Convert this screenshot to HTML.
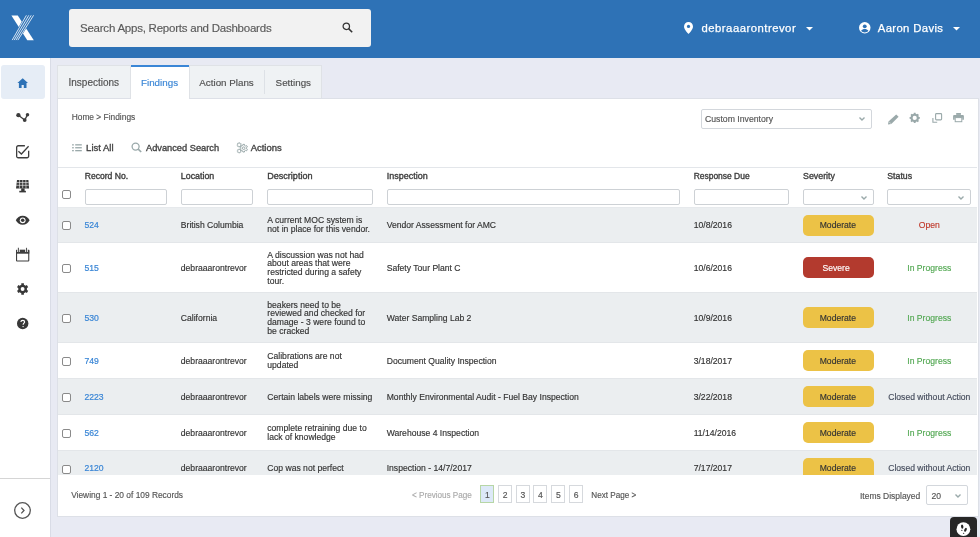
<!DOCTYPE html>
<html><head><meta charset="utf-8">
<style>
*{margin:0;padding:0;box-sizing:border-box;}
html,body{width:980px;height:537px;overflow:hidden;background:#e8eaf3;font-family:"Liberation Sans", sans-serif;color:#333;position:relative;}
.a{position:absolute;}
.t{position:absolute;white-space:nowrap;-webkit-text-stroke:0.15px currentColor;}
svg{position:absolute;overflow:visible;}
</style></head><body>
<div id="root" style="position:absolute;left:0;top:0;width:980px;height:537px;will-change:transform;">
<div class="a" style="left:0px;top:0px;width:980px;height:58px;background:#2e72b6;"></div>
<div class="a" style="left:69px;top:9px;width:302px;height:38px;background:#f2f2f2;border-radius:3px;"></div>
<div class="t " style="left:80px;top:21px;font-size:11.5px;line-height:14.38px;color:#5a5a5a;letter-spacing:-0.23px;">Search Apps, Reports and Dashboards</div>
<svg style="left:341.8px;top:22.4px" width="11" height="11" viewBox="0 0 11 11">
<circle cx="4.3" cy="4.3" r="3.2" stroke="#333" stroke-width="1.25" fill="none"/>
<line x1="6.6" y1="6.6" x2="10.2" y2="10.2" stroke="#333" stroke-width="1.5"/></svg>
<svg style="left:684px;top:22px" width="9" height="12" viewBox="0 0 9 12">
<path d="M4.5 0C2 0 0 2 0 4.5 0 7.6 4.5 12 4.5 12S9 7.6 9 4.5C9 2 7 0 4.5 0z" fill="#fff"/>
<circle cx="4.5" cy="4.4" r="1.6" fill="#2e72b6"/></svg>
<div class="t " style="left:701.5px;top:21px;font-size:11.3px;line-height:14.12px;color:#fff;letter-spacing:0.5px;-webkit-text-stroke:0.25px #fff;">debraaarontrevor</div>
<svg style="left:805.5px;top:26.5px" width="7" height="4" viewBox="0 0 7 4"><polygon points="0,0 7,0 3.5,3.6" fill="#fff"/></svg>
<svg style="left:858.5px;top:22px" width="11.5" height="11.5" viewBox="0 0 12 12">
<circle cx="6" cy="6" r="6" fill="#fff"/><circle cx="6" cy="4.5" r="2" fill="#2e72b6"/>
<path d="M2.2 9.2C3.1 7.9 4.5 7.4 6 7.4S8.9 7.9 9.8 9.2C8.9 10.4 7.5 11 6 11S3.1 10.4 2.2 9.2z" fill="#2e72b6"/></svg>
<div class="t " style="left:877.8px;top:21px;font-size:11.3px;line-height:14.12px;color:#fff;letter-spacing:0.36px;-webkit-text-stroke:0.25px #fff;">Aaron Davis</div>
<svg style="left:953px;top:26.5px" width="7" height="4" viewBox="0 0 7 4"><polygon points="0,0 7,0 3.5,3.6" fill="#fff"/></svg>
<div class="a" style="left:0px;top:58px;width:50px;height:479px;background:#fff;"></div>
<div class="a" style="left:50px;top:58px;width:1px;height:479px;background:#d9dce6;"></div>
<div class="a" style="left:1px;top:65px;width:44px;height:34px;background:#e6edf6;border-radius:3px;"></div>
<div class="a" style="left:0px;top:478px;width:50px;height:1px;background:#d5d5d5;"></div>
<svg style="left:14px;top:502px" width="17" height="17" viewBox="0 0 17 17">
<circle cx="8.5" cy="8.5" r="7.8" stroke="#555" stroke-width="1.3" fill="none"/>
<path d="M7.3 5.6L10 8.5 7.3 11.4" stroke="#555" stroke-width="1.3" fill="none"/></svg>
<div class="a" style="left:57px;top:65px;width:74px;height:34px;background:#eff2f4;border:1px solid #dfe2e6;border-bottom:none;"></div>
<div class="t " style="left:68.5px;top:77px;font-size:10px;line-height:12.5px;color:#505050;">Inspections</div>
<div class="a" style="left:131px;top:65px;width:58px;height:34px;background:#fff;border-top:2px solid #3a86d6;"></div>
<div class="t " style="left:141px;top:77px;font-size:9.8px;line-height:12.25px;color:#3a86d6;">Findings</div>
<div class="a" style="left:189px;top:65px;width:133px;height:34px;background:#eff2f4;border:1px solid #dfe2e6;border-bottom:none;"></div>
<div class="a" style="left:264px;top:69.5px;width:1px;height:24.5px;background:#dde1e6;"></div>
<div class="t " style="left:199.3px;top:77px;font-size:9.8px;line-height:12.25px;color:#505050;">Action Plans</div>
<div class="t " style="left:275.6px;top:77px;font-size:9.8px;line-height:12.25px;color:#505050;">Settings</div>
<div class="a" style="left:57px;top:98px;width:922px;height:419px;background:#fff;border:1px solid #dde0e7;"></div>
<div class="a" style="left:131px;top:98px;width:58px;height:1px;background:#fff;"></div>
<div class="t " style="left:71.7px;top:112px;font-size:8.4px;line-height:10.5px;color:#555;">Home &gt; Findings</div>
<div class="t " style="left:86.1px;top:142px;font-size:9.5px;line-height:11.88px;color:#444;-webkit-text-stroke:0.35px #444;">List All</div>
<div class="t " style="left:146px;top:143px;font-size:9.25px;line-height:11.56px;color:#444;-webkit-text-stroke:0.35px #444;">Advanced Search</div>
<div class="t " style="left:250.7px;top:142px;font-size:9.45px;line-height:11.81px;color:#444;-webkit-text-stroke:0.35px #444;">Actions</div>
<div class="a" style="left:700.5px;top:108.5px;width:171.5px;height:20.5px;background:#fff;border:1px solid #d3d7dc;border-radius:2px;"></div>
<div class="t " style="left:705px;top:114px;font-size:8.7px;line-height:10.88px;color:#555;">Custom Inventory</div>
<svg style="left:859px;top:117px" width="6" height="4" viewBox="0 0 6 4"><path d="M0.5 0.6L3 3.1 5.5 0.6" stroke="#9aa9aa" stroke-width="1.4" fill="none"/></svg>
<div class="a" style="left:58px;top:167px;width:919px;height:1px;background:#e3e6ea;"></div>
<div class="t " style="left:84.7px;top:171px;font-size:8.58px;line-height:10.72px;color:#3d3d3d;-webkit-text-stroke:0.35px #3d3d3d;">Record No.</div>
<div class="t " style="left:180.8px;top:171px;font-size:8.86px;line-height:11.07px;color:#3d3d3d;-webkit-text-stroke:0.35px #3d3d3d;">Location</div>
<div class="t " style="left:267.2px;top:171px;font-size:9.07px;line-height:11.34px;color:#3d3d3d;-webkit-text-stroke:0.35px #3d3d3d;">Description</div>
<div class="t " style="left:386.7px;top:171px;font-size:8.99px;line-height:11.24px;color:#3d3d3d;-webkit-text-stroke:0.35px #3d3d3d;">Inspection</div>
<div class="t " style="left:693.7px;top:171px;font-size:8.46px;line-height:10.58px;color:#3d3d3d;-webkit-text-stroke:0.35px #3d3d3d;">Response Due</div>
<div class="t " style="left:803px;top:171px;font-size:8.86px;line-height:11.07px;color:#3d3d3d;-webkit-text-stroke:0.35px #3d3d3d;">Severity</div>
<div class="t " style="left:887.3px;top:171px;font-size:8.74px;line-height:10.93px;color:#3d3d3d;-webkit-text-stroke:0.35px #3d3d3d;">Status</div>
<div class="a" style="left:62px;top:190px;width:9px;height:9px;background:#fff;border:1px solid #8a8a8a;border-radius:2px;"></div>
<div class="a" style="left:84.7px;top:189.3px;width:82.10000000000001px;height:15.4px;background:#fff;border:1px solid #cdd1d5;border-radius:2px;"></div>
<div class="a" style="left:180.6px;top:189.3px;width:72.9px;height:15.4px;background:#fff;border:1px solid #cdd1d5;border-radius:2px;"></div>
<div class="a" style="left:267.2px;top:189.3px;width:105.5px;height:15.4px;background:#fff;border:1px solid #cdd1d5;border-radius:2px;"></div>
<div class="a" style="left:386.7px;top:189.3px;width:293.09999999999997px;height:15.4px;background:#fff;border:1px solid #cdd1d5;border-radius:2px;"></div>
<div class="a" style="left:693.7px;top:189.3px;width:95.0px;height:15.4px;background:#fff;border:1px solid #cdd1d5;border-radius:2px;"></div>
<div class="a" style="left:803px;top:189.3px;width:70.60000000000002px;height:15.4px;background:#fff;border:1px solid #cdd1d5;border-radius:2px;"></div>
<div class="a" style="left:887.3px;top:189.3px;width:83.60000000000002px;height:15.4px;background:#fff;border:1px solid #cdd1d5;border-radius:2px;"></div>
<svg style="left:860.5px;top:195.5px" width="6" height="4" viewBox="0 0 6 4"><path d="M0.5 0.6L3 3.1 5.5 0.6" stroke="#9aa9aa" stroke-width="1.4" fill="none"/></svg>
<svg style="left:957.5px;top:195.5px" width="6" height="4" viewBox="0 0 6 4"><path d="M0.5 0.6L3 3.1 5.5 0.6" stroke="#9aa9aa" stroke-width="1.4" fill="none"/></svg>
<div class="a" style="left:58px;top:167px;width:919px;height:308px;overflow:hidden;">
<div class="a" style="left:0px;top:41px;width:919px;height:34px;background:#ebeef0;"></div>
<div class="a" style="left:0px;top:76px;width:919px;height:49px;background:#fff;"></div>
<div class="a" style="left:0px;top:126px;width:919px;height:49px;background:#ebeef0;"></div>
<div class="a" style="left:0px;top:176px;width:919px;height:35px;background:#fff;"></div>
<div class="a" style="left:0px;top:212px;width:919px;height:35px;background:#ebeef0;"></div>
<div class="a" style="left:0px;top:248px;width:919px;height:35px;background:#fff;"></div>
<div class="a" style="left:0px;top:284px;width:919px;height:35px;background:#ebeef0;"></div>
<div class="a" style="left:0px;top:40px;width:919px;height:1px;background:#e6e9ec;"></div>
<div class="a" style="left:0px;top:75px;width:919px;height:1px;background:#e3e6e9;"></div>
<div class="a" style="left:0px;top:125px;width:919px;height:1px;background:#e3e6e9;"></div>
<div class="a" style="left:0px;top:175px;width:919px;height:1px;background:#e3e6e9;"></div>
<div class="a" style="left:0px;top:211px;width:919px;height:1px;background:#e3e6e9;"></div>
<div class="a" style="left:0px;top:247px;width:919px;height:1px;background:#e3e6e9;"></div>
<div class="a" style="left:0px;top:283px;width:919px;height:1px;background:#e3e6e9;"></div>
<div class="a" style="left:4px;top:54.0px;width:9px;height:9px;background:#fff;border:1px solid #8a8a8a;border-radius:2px;"></div>
<div class="t " style="left:26.5px;top:53px;font-size:8.6px;line-height:10.75px;color:#3a86d6;-webkit-text-stroke:0.2px #3a86d6;">524</div>
<div class="t " style="left:122.80000000000001px;top:53px;font-size:8.6px;line-height:10.75px;color:#333;">British Columbia</div>
<div class="t " style="left:209.3px;top:48px;font-size:8.6px;line-height:10.75px;color:#333;">A current MOC system is</div>
<div class="t " style="left:209.3px;top:57px;font-size:8.6px;line-height:10.75px;color:#333;">not in place for this vendor.</div>
<div class="t " style="left:328.7px;top:53px;font-size:8.6px;line-height:10.75px;color:#333;">Vendor Assessment for AMC</div>
<div class="t " style="left:635.7px;top:53px;font-size:8.6px;line-height:10.75px;color:#333;">10/8/2016</div>
<div class="a" style="left:745px;top:47.5px;width:70.5px;height:21px;background:#ecc246;border-radius:5px;"></div>
<div class="t " style="left:761.7px;top:53px;font-size:8.6px;line-height:10.75px;color:#333;">Moderate</div>
<div class="t" style="left:829.3px;width:84px;text-align:center;top:53px;font-size:8.6px;line-height:10.75px;color:#c0392b;font-weight:normal;">Open</div>
<div class="a" style="left:4px;top:96.5px;width:9px;height:9px;background:#fff;border:1px solid #8a8a8a;border-radius:2px;"></div>
<div class="t " style="left:26.5px;top:96px;font-size:8.6px;line-height:10.75px;color:#3a86d6;-webkit-text-stroke:0.2px #3a86d6;">515</div>
<div class="t " style="left:122.80000000000001px;top:96px;font-size:8.6px;line-height:10.75px;color:#333;">debraaarontrevor</div>
<div class="t " style="left:209.3px;top:83px;font-size:8.6px;line-height:10.75px;color:#333;">A discussion was not had</div>
<div class="t " style="left:209.3px;top:91px;font-size:8.6px;line-height:10.75px;color:#333;">about areas that were</div>
<div class="t " style="left:209.3px;top:100px;font-size:8.6px;line-height:10.75px;color:#333;">restricted during a safety</div>
<div class="t " style="left:209.3px;top:109px;font-size:8.6px;line-height:10.75px;color:#333;">tour.</div>
<div class="t " style="left:328.7px;top:96px;font-size:8.6px;line-height:10.75px;color:#333;">Safety Tour Plant C</div>
<div class="t " style="left:635.7px;top:96px;font-size:8.6px;line-height:10.75px;color:#333;">10/6/2016</div>
<div class="a" style="left:745px;top:90.0px;width:70.5px;height:21px;background:#b33a2e;border-radius:5px;"></div>
<div class="t " style="left:764.5px;top:96px;font-size:8.6px;line-height:10.75px;color:#fff;">Severe</div>
<div class="t" style="left:829.3px;width:84px;text-align:center;top:96px;font-size:8.6px;line-height:10.75px;color:#52a852;font-weight:normal;">In Progress</div>
<div class="a" style="left:4px;top:146.5px;width:9px;height:9px;background:#fff;border:1px solid #8a8a8a;border-radius:2px;"></div>
<div class="t " style="left:26.5px;top:146px;font-size:8.6px;line-height:10.75px;color:#3a86d6;-webkit-text-stroke:0.2px #3a86d6;">530</div>
<div class="t " style="left:122.80000000000001px;top:146px;font-size:8.6px;line-height:10.75px;color:#333;">California</div>
<div class="t " style="left:209.3px;top:133px;font-size:8.6px;line-height:10.75px;color:#333;">beakers need to be</div>
<div class="t " style="left:209.3px;top:141px;font-size:8.6px;line-height:10.75px;color:#333;">reviewed and checked for</div>
<div class="t " style="left:209.3px;top:150px;font-size:8.6px;line-height:10.75px;color:#333;">damage - 3 were found to</div>
<div class="t " style="left:209.3px;top:159px;font-size:8.6px;line-height:10.75px;color:#333;">be cracked</div>
<div class="t " style="left:328.7px;top:146px;font-size:8.6px;line-height:10.75px;color:#333;">Water Sampling Lab 2</div>
<div class="t " style="left:635.7px;top:146px;font-size:8.6px;line-height:10.75px;color:#333;">10/9/2016</div>
<div class="a" style="left:745px;top:140.0px;width:70.5px;height:21px;background:#ecc246;border-radius:5px;"></div>
<div class="t " style="left:761.7px;top:146px;font-size:8.6px;line-height:10.75px;color:#333;">Moderate</div>
<div class="t" style="left:829.3px;width:84px;text-align:center;top:146px;font-size:8.6px;line-height:10.75px;color:#52a852;font-weight:normal;">In Progress</div>
<div class="a" style="left:4px;top:189.5px;width:9px;height:9px;background:#fff;border:1px solid #8a8a8a;border-radius:2px;"></div>
<div class="t " style="left:26.5px;top:189px;font-size:8.6px;line-height:10.75px;color:#3a86d6;-webkit-text-stroke:0.2px #3a86d6;">749</div>
<div class="t " style="left:122.80000000000001px;top:189px;font-size:8.6px;line-height:10.75px;color:#333;">debraaarontrevor</div>
<div class="t " style="left:209.3px;top:184px;font-size:8.6px;line-height:10.75px;color:#333;">Calibrations are not</div>
<div class="t " style="left:209.3px;top:193px;font-size:8.6px;line-height:10.75px;color:#333;">updated</div>
<div class="t " style="left:328.7px;top:189px;font-size:8.6px;line-height:10.75px;color:#333;">Document Quality Inspection</div>
<div class="t " style="left:635.7px;top:189px;font-size:8.6px;line-height:10.75px;color:#333;">3/18/2017</div>
<div class="a" style="left:745px;top:183.0px;width:70.5px;height:21px;background:#ecc246;border-radius:5px;"></div>
<div class="t " style="left:761.7px;top:189px;font-size:8.6px;line-height:10.75px;color:#333;">Moderate</div>
<div class="t" style="left:829.3px;width:84px;text-align:center;top:189px;font-size:8.6px;line-height:10.75px;color:#52a852;font-weight:normal;">In Progress</div>
<div class="a" style="left:4px;top:225.5px;width:9px;height:9px;background:#fff;border:1px solid #8a8a8a;border-radius:2px;"></div>
<div class="t " style="left:26.5px;top:225px;font-size:8.6px;line-height:10.75px;color:#3a86d6;-webkit-text-stroke:0.2px #3a86d6;">2223</div>
<div class="t " style="left:122.80000000000001px;top:225px;font-size:8.6px;line-height:10.75px;color:#333;">debraaarontrevor</div>
<div class="t " style="left:209.3px;top:225px;font-size:8.6px;line-height:10.75px;color:#333;">Certain labels were missing</div>
<div class="t " style="left:328.7px;top:225px;font-size:8.6px;line-height:10.75px;color:#333;">Monthly Environmental Audit - Fuel Bay Inspection</div>
<div class="t " style="left:635.7px;top:225px;font-size:8.6px;line-height:10.75px;color:#333;">3/22/2018</div>
<div class="a" style="left:745px;top:219.0px;width:70.5px;height:21px;background:#ecc246;border-radius:5px;"></div>
<div class="t " style="left:761.7px;top:225px;font-size:8.6px;line-height:10.75px;color:#333;">Moderate</div>
<div class="t" style="left:829.3px;width:84px;text-align:center;top:225px;font-size:8.6px;line-height:10.75px;color:#454c5c;font-weight:normal;">Closed without Action</div>
<div class="a" style="left:4px;top:261.5px;width:9px;height:9px;background:#fff;border:1px solid #8a8a8a;border-radius:2px;"></div>
<div class="t " style="left:26.5px;top:261px;font-size:8.6px;line-height:10.75px;color:#3a86d6;-webkit-text-stroke:0.2px #3a86d6;">562</div>
<div class="t " style="left:122.80000000000001px;top:261px;font-size:8.6px;line-height:10.75px;color:#333;">debraaarontrevor</div>
<div class="t " style="left:209.3px;top:256px;font-size:8.6px;line-height:10.75px;color:#333;">complete retraining due to</div>
<div class="t " style="left:209.3px;top:265px;font-size:8.6px;line-height:10.75px;color:#333;">lack of knowledge</div>
<div class="t " style="left:328.7px;top:261px;font-size:8.6px;line-height:10.75px;color:#333;">Warehouse 4 Inspection</div>
<div class="t " style="left:635.7px;top:261px;font-size:8.6px;line-height:10.75px;color:#333;">11/14/2016</div>
<div class="a" style="left:745px;top:255.0px;width:70.5px;height:21px;background:#ecc246;border-radius:5px;"></div>
<div class="t " style="left:761.7px;top:261px;font-size:8.6px;line-height:10.75px;color:#333;">Moderate</div>
<div class="t" style="left:829.3px;width:84px;text-align:center;top:261px;font-size:8.6px;line-height:10.75px;color:#52a852;font-weight:normal;">In Progress</div>
<div class="a" style="left:4px;top:297.5px;width:9px;height:9px;background:#fff;border:1px solid #8a8a8a;border-radius:2px;"></div>
<div class="t " style="left:26.5px;top:296px;font-size:8.6px;line-height:10.75px;color:#3a86d6;-webkit-text-stroke:0.2px #3a86d6;">2120</div>
<div class="t " style="left:122.80000000000001px;top:296px;font-size:8.6px;line-height:10.75px;color:#333;">debraaarontrevor</div>
<div class="t " style="left:209.3px;top:296px;font-size:8.6px;line-height:10.75px;color:#333;">Cop was not perfect</div>
<div class="t " style="left:328.7px;top:296px;font-size:8.6px;line-height:10.75px;color:#333;">Inspection - 14/7/2017</div>
<div class="t " style="left:635.7px;top:296px;font-size:8.6px;line-height:10.75px;color:#333;">7/17/2017</div>
<div class="a" style="left:745px;top:291.0px;width:70.5px;height:21px;background:#ecc246;border-radius:5px;"></div>
<div class="t " style="left:761.7px;top:296px;font-size:8.6px;line-height:10.75px;color:#333;">Moderate</div>
<div class="t" style="left:829.3px;width:84px;text-align:center;top:296px;font-size:8.6px;line-height:10.75px;color:#454c5c;font-weight:normal;">Closed without Action</div>
</div>
<div class="t " style="left:71.2px;top:490px;font-size:8.37px;line-height:10.46px;color:#555;">Viewing 1 - 20 of 109 Records</div>
<div class="t " style="left:412px;top:491px;font-size:8.14px;line-height:10.18px;color:#aaa;">&lt; Previous Page</div>
<div class="a" style="left:480.4px;top:485.2px;width:14px;height:18px;background:#dde9f8;border:1px solid #b7d6a6;"></div>
<div class="t" style="left:480.4px;width:14px;text-align:center;top:490px;font-size:8.6px;line-height:10.75px;color:#555;font-weight:normal;">1</div>
<div class="a" style="left:498.2px;top:485.2px;width:14px;height:18px;background:#fff;border:1px solid #d6d9dd;"></div>
<div class="t" style="left:498.2px;width:14px;text-align:center;top:490px;font-size:8.6px;line-height:10.75px;color:#555;font-weight:normal;">2</div>
<div class="a" style="left:516px;top:485.2px;width:14px;height:18px;background:#fff;border:1px solid #d6d9dd;"></div>
<div class="t" style="left:516px;width:14px;text-align:center;top:490px;font-size:8.6px;line-height:10.75px;color:#555;font-weight:normal;">3</div>
<div class="a" style="left:533.4px;top:485.2px;width:14px;height:18px;background:#fff;border:1px solid #d6d9dd;"></div>
<div class="t" style="left:533.4px;width:14px;text-align:center;top:490px;font-size:8.6px;line-height:10.75px;color:#555;font-weight:normal;">4</div>
<div class="a" style="left:551.3px;top:485.2px;width:14px;height:18px;background:#fff;border:1px solid #d6d9dd;"></div>
<div class="t" style="left:551.3px;width:14px;text-align:center;top:490px;font-size:8.6px;line-height:10.75px;color:#555;font-weight:normal;">5</div>
<div class="a" style="left:569.1px;top:485.2px;width:14px;height:18px;background:#fff;border:1px solid #d6d9dd;"></div>
<div class="t" style="left:569.1px;width:14px;text-align:center;top:490px;font-size:8.6px;line-height:10.75px;color:#555;font-weight:normal;">6</div>
<div class="t " style="left:591.3px;top:491px;font-size:8.14px;line-height:10.18px;color:#555;">Next Page &gt;</div>
<div class="t " style="left:860px;top:491px;font-size:8.48px;line-height:10.6px;color:#555;">Items Displayed</div>
<div class="a" style="left:926.4px;top:485.3px;width:41.2px;height:20.2px;background:#fff;border:1px solid #d3d7dc;border-radius:2px;"></div>
<div class="t " style="left:931.4px;top:491px;font-size:8.6px;line-height:10.75px;color:#555;">20</div>
<svg style="left:955px;top:493.5px" width="6" height="4" viewBox="0 0 6 4"><path d="M0.5 0.6L3 3.1 5.5 0.6" stroke="#9aa9aa" stroke-width="1.4" fill="none"/></svg>
<div class="a" style="left:950px;top:517px;width:27px;height:24px;background:#272727;border-radius:4px;"></div>
<svg style="left:0;top:0" width="980" height="537"><polygon points="11.4,15.5 17.8,15.5 33.8,40.2 27.3,40.2" fill="#fff"/><polygon points="25.3,15.2 34.6,15.2 18.8,40.3 11.2,40.3" fill="#2e72b6"/><g stroke="#fff" stroke-width="0.8" fill="none"><line x1="26.4" y1="15.3" x2="12.2" y2="40.1"/><line x1="28.8" y1="15.3" x2="14.1" y2="40.1"/><line x1="31.2" y1="15.3" x2="16.0" y2="40.1"/><line x1="33.6" y1="15.3" x2="17.9" y2="40.1"/></g><path d="M22.7 78.2L17.4 83h1.5v5h2.7v-3h2.2v3h2.7v-5h1.5z" fill="#2e72b6"/><g stroke="#3c3c3c" stroke-width="1.3"><line x1="18.4" y1="115.2" x2="24.7" y2="120.1"/><line x1="24.7" y1="120.1" x2="27.5" y2="114.8"/></g><circle cx="18.4" cy="115.2" r="2.15" fill="#3c3c3c"/><circle cx="27.5" cy="114.8" r="1.75" fill="#3c3c3c"/><circle cx="24.7" cy="120.1" r="1.9" fill="#3c3c3c"/><path transform="translate(15 144)" d="M9.9 1.75H3.25A1.6 1.6 0 0 0 1.65 3.35V12.15A1.6 1.6 0 0 0 3.25 13.75H12.05A1.6 1.6 0 0 0 13.65 12.15V6.7" stroke="#3e3e3e" stroke-width="1.3" fill="none"/><path transform="translate(15 144)" d="M3.4 7.2L6.4 10L13.6 2.3" stroke="#3e3e3e" stroke-width="1.3" fill="none"/><g transform="translate(15 179)"><path d="M2 1H13.4L14.1 9.4H1z" fill="#383838"/><g stroke="#fff" stroke-width="0.6"><line x1="1.5" y1="3.6" x2="13.6" y2="3.6"/><line x1="1.3" y1="6.3" x2="13.8" y2="6.3"/><line x1="4.6" y1="1" x2="4.4" y2="9.4"/><line x1="7.7" y1="1" x2="7.7" y2="9.4"/><line x1="10.8" y1="1" x2="11" y2="9.4"/></g><rect x="6.2" y="9.4" width="3.4" height="2.8" fill="#383838"/><rect x="4.3" y="11.8" width="6.6" height="1.6" fill="#383838"/></g><path d="M22.7 215.7C19.6 215.7 17.1 217.6 15.8 220.25 17.1 222.9 19.6 224.8 22.7 224.8S28.3 222.9 29.6 220.25C28.3 217.6 25.8 215.7 22.7 215.7z" fill="#383838"/><circle cx="22.7" cy="220.3" r="2.9" fill="#fff"/><circle cx="22.7" cy="220.3" r="1.8" fill="#383838"/><g transform="translate(15 247)"><rect x="1.55" y="3.4" width="12.2" height="10.6" rx="0.5" stroke="#3e3e3e" stroke-width="1.1" fill="none"/><rect x="1" y="2.9" width="13.3" height="3.8" fill="#3e3e3e"/><g stroke="#fff" stroke-width="2.6"><line x1="3.4" y1="0.5" x2="3.4" y2="5"/><line x1="11.5" y1="0.5" x2="11.5" y2="5"/></g><g stroke="#555" stroke-width="1.1"><line x1="3.4" y1="0.8" x2="3.4" y2="5.2"/><line x1="11.5" y1="0.8" x2="11.5" y2="5.2"/></g></g><path d="M21.33 284.84 L21.26 283.35 L23.94 283.35 L23.87 284.84 A4.4 4.4 0 0 1 25.61 285.84 L26.86 285.05 L28.20 287.36 L26.88 288.05 A4.4 4.4 0 0 1 26.88 290.05 L28.20 290.74 L26.86 293.05 L25.61 292.26 A4.4 4.4 0 0 1 23.87 293.26 L23.94 294.75 L21.26 294.75 L21.33 293.26 A4.4 4.4 0 0 1 19.59 292.26 L18.34 293.05 L17.00 290.74 L18.32 290.05 A4.4 4.4 0 0 1 18.32 288.05 L17.00 287.36 L18.34 285.05 L19.59 285.84 A4.4 4.4 0 0 1 21.33 284.84z M24.55 289.05 A1.95 1.95 0 1 0 20.65 289.05 A1.95 1.95 0 1 0 24.55 289.05z" fill="#383838" fill-rule="evenodd"/><circle cx="22.7" cy="323.5" r="5.7" fill="#383838"/><path d="M20.9 322.0C20.9 320.9 21.7 320.3 22.8 320.3S24.6 321.0 24.6 321.9C24.6 323.1 23.1 323.2 23.1 324.8" stroke="#fff" stroke-width="1.15" fill="none"/><circle cx="23.1" cy="326.6" r="0.7" fill="#fff"/><g fill="#9aa9aa"><rect x="72.1" y="144.2" width="1.7" height="1.3"/><rect x="72.1" y="147.1" width="1.7" height="1.3"/><rect x="72.1" y="150" width="1.7" height="1.3"/><rect x="75.2" y="144.2" width="6.6" height="1.3"/><rect x="75.2" y="147.1" width="6.6" height="1.3"/><rect x="75.2" y="150" width="6.6" height="1.3"/></g><circle cx="135.6" cy="146.6" r="3.5" stroke="#9aa9aa" stroke-width="1.3" fill="none"/><line x1="138.2" y1="149.2" x2="141.2" y2="152" stroke="#9aa9aa" stroke-width="1.7"/><path d="M242.89 145.42 L242.89 144.39 L244.51 144.39 L244.51 145.42 A2.9 2.9 0 0 1 245.71 146.11 L246.60 145.59 L247.41 146.99 L246.52 147.51 A2.9 2.9 0 0 1 246.52 148.89 L247.41 149.41 L246.60 150.81 L245.71 150.29 A2.9 2.9 0 0 1 244.51 150.98 L244.51 152.01 L242.89 152.01 L242.89 150.98 A2.9 2.9 0 0 1 241.69 150.29 L240.80 150.81 L239.99 149.41 L240.88 148.89 A2.9 2.9 0 0 1 240.88 147.51 L239.99 146.99 L240.80 145.59 L241.69 146.11 A2.9 2.9 0 0 1 242.89 145.42z M245.00 148.20 A1.3 1.3 0 1 0 242.40 148.20 A1.3 1.3 0 1 0 245.00 148.20z" fill="none" stroke="#9aa9aa" stroke-width="1.0" stroke-linejoin="round"/><path d="M238.75 143.36 L238.74 142.75 L239.66 142.75 L239.65 143.36 A1.6 1.6 0 0 1 240.31 143.75 L240.83 143.43 L241.29 144.22 L240.75 144.52 A1.6 1.6 0 0 1 240.75 145.28 L241.29 145.58 L240.83 146.37 L240.31 146.05 A1.6 1.6 0 0 1 239.65 146.44 L239.66 147.05 L238.74 147.05 L238.75 146.44 A1.6 1.6 0 0 1 238.09 146.05 L237.57 146.37 L237.11 145.58 L237.65 145.28 A1.6 1.6 0 0 1 237.65 144.52 L237.11 144.22 L237.57 143.43 L238.09 143.75 A1.6 1.6 0 0 1 238.75 143.36z" fill="none" stroke="#9aa9aa" stroke-width="0.9" stroke-linejoin="round"/><path d="M238.78 149.56 L238.78 149.04 L239.62 149.04 L239.62 149.56 A1.5 1.5 0 0 1 240.24 149.92 L240.69 149.66 L241.10 150.38 L240.66 150.64 A1.5 1.5 0 0 1 240.66 151.36 L241.10 151.62 L240.69 152.34 L240.24 152.08 A1.5 1.5 0 0 1 239.62 152.44 L239.62 152.96 L238.78 152.96 L238.78 152.44 A1.5 1.5 0 0 1 238.16 152.08 L237.71 152.34 L237.30 151.62 L237.74 151.36 A1.5 1.5 0 0 1 237.74 150.64 L237.30 150.38 L237.71 149.66 L238.16 149.92 A1.5 1.5 0 0 1 238.78 149.56z" fill="none" stroke="#9aa9aa" stroke-width="0.9" stroke-linejoin="round"/><path d="M896.2 114.4L898.6 116.8 891.3 124.1 888.0 124.6 888.5 121.4z" fill="#9aa9aa"/><line x1="888.9" y1="121.6" x2="891.1" y2="123.8" stroke="#fff" stroke-width="0.5"/><path d="M913.72 113.82 L913.81 112.78 L915.59 112.78 L915.68 113.82 A4.2 4.2 0 0 1 916.89 114.32 L917.69 113.65 L918.95 114.91 L918.28 115.71 A4.2 4.2 0 0 1 918.78 116.92 L919.82 117.01 L919.82 118.79 L918.78 118.88 A4.2 4.2 0 0 1 918.28 120.09 L918.95 120.89 L917.69 122.15 L916.89 121.48 A4.2 4.2 0 0 1 915.68 121.98 L915.59 123.02 L913.81 123.02 L913.72 121.98 A4.2 4.2 0 0 1 912.51 121.48 L911.71 122.15 L910.45 120.89 L911.12 120.09 A4.2 4.2 0 0 1 910.62 118.88 L909.58 118.79 L909.58 117.01 L910.62 116.92 A4.2 4.2 0 0 1 911.12 115.71 L910.45 114.91 L911.71 113.65 L912.51 114.32 A4.2 4.2 0 0 1 913.72 113.82z M916.80 117.90 A2.1 2.1 0 1 0 912.60 117.90 A2.1 2.1 0 1 0 916.80 117.90z" fill="#9aa9aa" fill-rule="evenodd"/><rect x="935.6" y="113.6" width="6.0" height="6.3" rx="0.8" stroke="#9aa9aa" stroke-width="1.1" fill="none"/><path d="M932.9 118V122.2H937.2" stroke="#9aa9aa" stroke-width="1.1" fill="none"/><rect x="956.2" y="113" width="4.7" height="1.9" fill="#9aa9aa"/><path d="M954.2 114.9H962.8A1.1 1.1 0 0 1 963.9 116V119.8H962.3V117.6H954.7V119.8H953.1V116A1.1 1.1 0 0 1 954.2 114.9z" fill="#9aa9aa"/><rect x="955.2" y="117.6" width="6.6" height="4.1" stroke="#9aa9aa" stroke-width="1" fill="none"/><circle cx="963.4" cy="529.2" r="6.9" fill="#fff"/><ellipse cx="962.2" cy="526.6" rx="1.15" ry="2.1" transform="rotate(-8 962.2 526.6)" fill="#222"/><ellipse cx="961.8" cy="530.3" rx="0.75" ry="0.55" fill="#222"/><ellipse cx="965.5" cy="529.8" rx="1.15" ry="2.1" transform="rotate(25 965.5 529.8)" fill="#222"/><ellipse cx="963.6" cy="533.2" rx="0.7" ry="0.55" fill="#222"/></svg>
</div></body></html>
